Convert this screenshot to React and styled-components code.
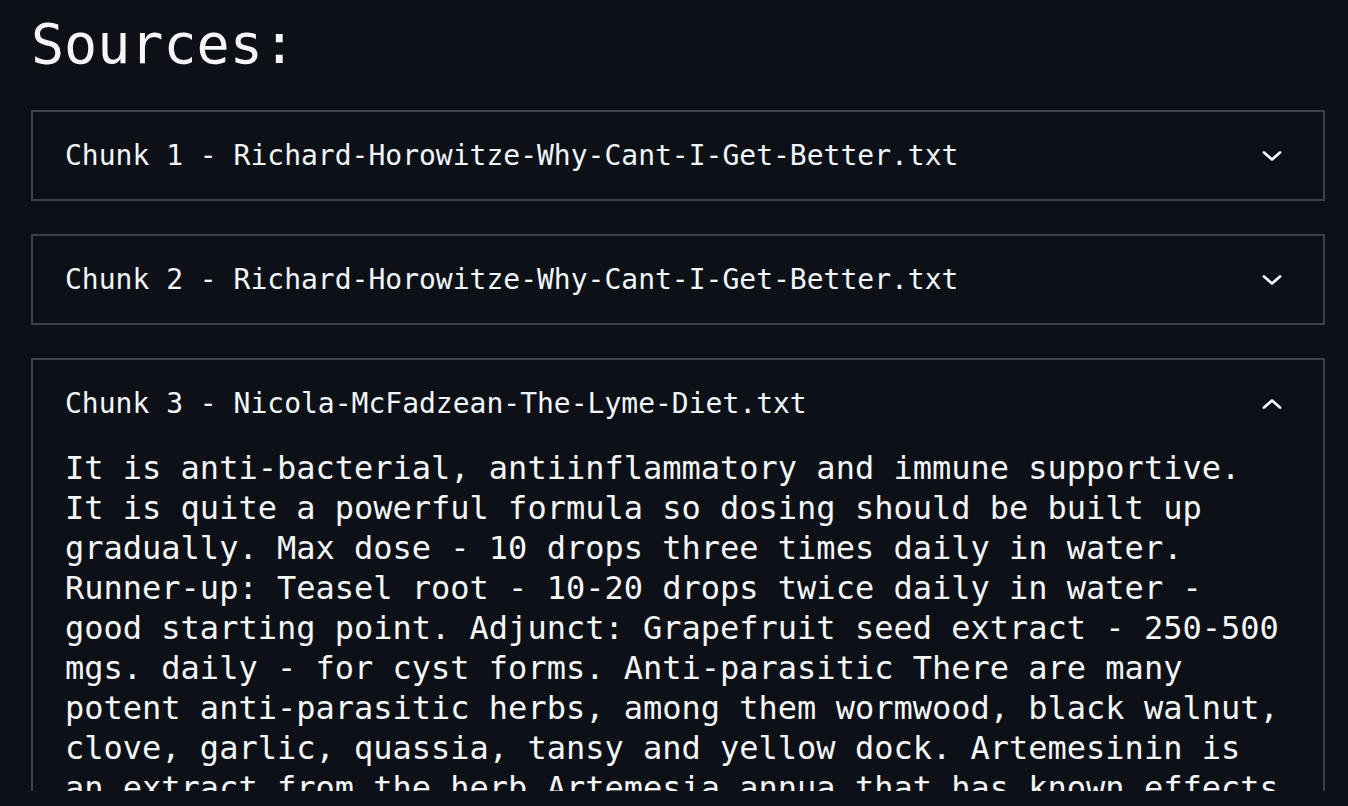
import React, { useState } from 'react';
import styled, { createGlobalStyle } from 'styled-components';

const GlobalStyle = createGlobalStyle`
  html, body {
    margin: 0;
    padding: 0;
    background: #0d1117;
  }
  body {
    font-family: "DejaVu Sans Mono", "Liberation Mono", monospace;
    color: #f0f6fc;
  }
`;

const Viewport = styled.div`
  height: 791px;
  overflow: hidden;
  background: #0d1117;
`;

const Content = styled.div`
  padding: 0 23px 40px 31px;
`;

const Title = styled.h2`
  margin: 0 0 31px;
  padding-top: 9px;
  font-size: 55px;
  line-height: 70px;
  font-weight: 400;
  color: #f4f6f8;
`;

const List = styled.div`
  display: flex;
  flex-direction: column;
  gap: 33px;
`;

const Item = styled.div`
  border: 2px solid #3b4148;
  background: #0d1117;
`;

const Header = styled.button`
  display: flex;
  align-items: center;
  justify-content: space-between;
  width: 100%;
  height: 87px;
  padding: 0 41px 0 32px;
  border: 0;
  background: transparent;
  color: #f0f6fc;
  font-family: inherit;
  font-size: 28px;
  cursor: pointer;
  text-align: left;
`;

const Body = styled.div`
  padding: 0 32px 32px 32px;
  margin-top: 1px;
  font-size: 32px;
  line-height: 40px;
  color: #f4f6f8;
`;

const Chevron = ({ open }) => (
  <svg width="20" height="12" viewBox="0 0 20 12" fill="none" stroke="currentColor" strokeWidth="2.8" strokeLinecap="round" strokeLinejoin="round">
    {open ? <polyline points="2,9.5 10,2.5 18,9.5" /> : <polyline points="2,2.5 10,9.5 18,2.5" />}
  </svg>
);

const chunks = [
  { title: 'Chunk 1 - Richard-Horowitze-Why-Cant-I-Get-Better.txt', text: '' },
  { title: 'Chunk 2 - Richard-Horowitze-Why-Cant-I-Get-Better.txt', text: '' },
  {
    title: 'Chunk 3 - Nicola-McFadzean-The-Lyme-Diet.txt',
    text:
      'It is anti-bacterial, antiinflammatory and immune supportive. It is quite a powerful formula so dosing should be built up gradually. Max dose - 10 drops three times daily in water. Runner-up: Teasel root - 10-20 drops twice daily in water - good starting point. Adjunct: Grapefruit seed extract - 250-500 mgs. daily - for cyst forms. Anti-parasitic There are many potent anti-parasitic herbs, among them wormwood, black walnut, clove, garlic, quassia, tansy and yellow dock. Artemesinin is an extract from the herb Artemesia annua that has known effects against parasites and is commonly used in the treatment of babesia.',
  },
];

export default function App() {
  const [open, setOpen] = useState(2);
  return (
    <Viewport>
      <GlobalStyle />
      <Content>
        <Title>Sources:</Title>
        <List>
          {chunks.map((c, i) => (
            <Item key={i}>
              <Header onClick={() => setOpen(open === i ? -1 : i)}>
                <span>{c.title}</span>
                <Chevron open={open === i} />
              </Header>
              {open === i && <Body>{c.text}</Body>}
            </Item>
          ))}
        </List>
      </Content>
    </Viewport>
  );
}
